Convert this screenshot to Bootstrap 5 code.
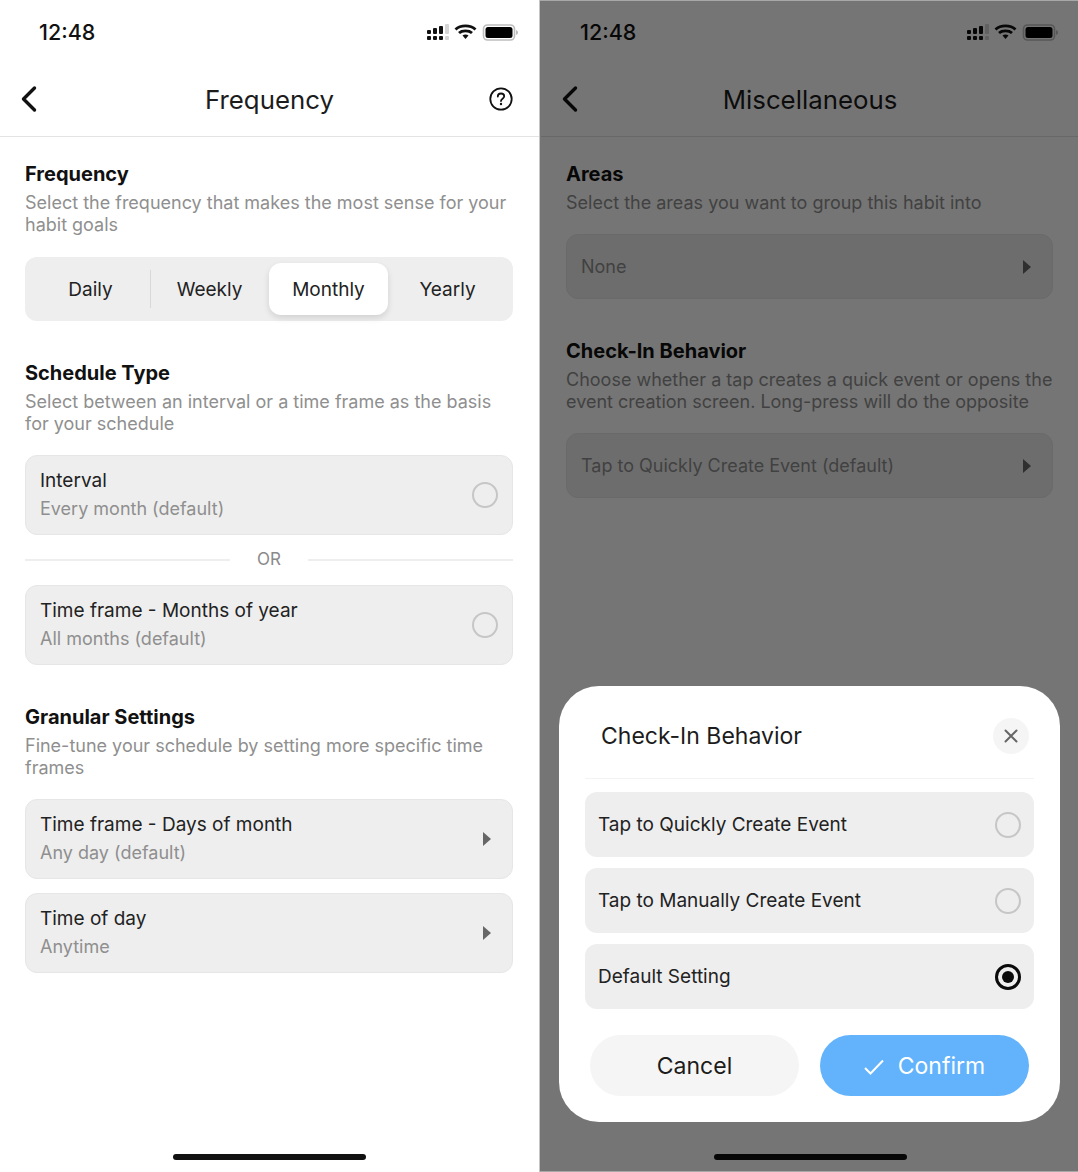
<!DOCTYPE html>
<html lang="en">
<head>
<meta charset="utf-8">
<title>Habit schedule</title>
<link href="https://cdn.jsdelivr.net/npm/bootstrap@5.3.0/dist/css/bootstrap.min.css" rel="stylesheet">
<style>
html,body{margin:0;background:#fff}
body{font-family:"Inter","Liberation Sans",sans-serif;color:#1a1a1a;width:1078px;height:1172px;overflow:hidden}
.stage{width:1078px;height:1172px;overflow:hidden}
.pane{position:relative;height:1172px;background:#fff;flex:none}
.pane-a{width:539px}
.pane-gap{width:1px;background:#c4c4c4;flex:none}
.pane-b{width:538px;overflow:hidden}
.pane-b .inner{width:538px;margin-left:1px}
.pane-b .homebar{left:174px}
.status{height:66px;padding:0 21px 0 39px;display:flex;align-items:center;justify-content:space-between}
.clock{font-size:21.5px;font-weight:500;line-height:1;color:#111}
.topbar{height:71px;border-bottom:1px solid #e3e3e3;position:relative;display:flex;align-items:center;justify-content:space-between;padding:0 26px 4px 20px}
.topbar .ttl{position:absolute;left:0;right:0;top:18px;text-align:center;font-size:25.8px;line-height:32px;color:#1c1c1c}
.body-pad{padding:26px 26px 0 25px}
.hd{font-size:20px;font-weight:700;line-height:22px;color:#111;margin:0 0 7px}
.sub{font-size:18px;line-height:22px;color:#8f8f8f;margin:0}
.seg{height:64px;margin-top:21px;background:#eeeeee;border-radius:12px;display:flex;padding:6px;position:relative}
.seg-item{flex:1;display:flex;align-items:center;justify-content:center;font-size:19px;color:#222;border-radius:12px;padding-top:2px}
.seg-item.on{background:#fff;box-shadow:0 3px 6px rgba(0,0,0,.12)}
.seg-rule{position:absolute;left:125px;top:13px;bottom:13px;width:1px;background:#d8d8d8}
.sec{margin-top:41px}
.opt{background:#eee;border:1px solid #e6e6e6;border-radius:12px;height:80px;padding:0 14px;display:flex;align-items:center;justify-content:space-between;margin-top:14px}
.opt-first{margin-top:20px}
.opt-flush{margin-top:0}
.opt .t1{font-size:19px;line-height:24px;color:#222}
.opt .t2{font-size:18px;line-height:24px;color:#8f8f8f;margin-top:4px}
.opt-plain{height:65px;padding:0 14px;margin-top:20px}
.orline{display:flex;align-items:center;height:50px;color:#8a8a8a;font-size:17px}
.orline::before,.orline::after{content:"";height:2px;background:#eee;flex:1}
.orline span{width:78px;text-align:center}
.ring{width:26px;height:26px;border:2px solid #c6c6c6;border-radius:50%;flex:none}
.caret{width:8px;height:14px;flex:none;margin-right:7px}
.homebar{position:absolute;left:173px;top:1154px;width:193px;height:6px;border-radius:3px;background:#111}
.dim{position:absolute;inset:0;background:rgba(0,0,0,.54);box-shadow:inset 0 1px 0 #a8a8a8,inset 0 -1px 0 #a8a8a8}
.sheet{position:absolute;left:19px;top:686px;width:501px;height:436px;border-radius:40px;background:#fff;padding:0 26px;overflow:hidden}
.sheet-top{height:93px;border-bottom:1px solid #f3f3f3;display:flex;align-items:center;justify-content:space-between;padding:8px 5px 0 16px}
.sheet-top .name{font-size:23px;color:#1c1c1c;padding-top:1px}
.closer{width:36px;height:36px;padding:0;border:0;background:#f5f5f5;border-radius:50%;display:flex;align-items:center;justify-content:center;margin-top:-1px}
.choice{height:65px;background:#eee;border-radius:12px;display:flex;align-items:center;justify-content:space-between;padding:0 13px;font-size:19px;color:#222;margin-top:11px}
.choice-first{margin-top:13px}
.lbl{padding-top:2px}
.ring-on{border:3px solid #0a0a0a;display:flex;align-items:center;justify-content:center}
.ring-on::after{content:"";width:12px;height:12px;border-radius:50%;background:#0a0a0a}
.actions{display:flex;gap:21px;padding:0 5px;margin-top:26px}
.pill{flex:1;height:61px;border:0;border-radius:31px;font-size:23px;display:flex;align-items:center;justify-content:center;gap:14px;padding:2px 0 0}
.pill-x,.pill-x:hover{background:#f5f5f5;color:#1c1c1c}
.pill-ok,.pill-ok:hover{background:#62b3fb;color:#fff}
</style>
</head>
<body>
<div class="stage d-flex">
  <section class="pane pane-a">
    <div class="status">
      <span class="clock">12:48</span>
      <svg width="92" height="18" viewBox="0 0 92 18" aria-hidden="true">
        <g transform="translate(1 0)"><g fill="#111"><rect x="0" y="6" width="4" height="4" rx="1"/><rect x="0" y="12" width="4" height="4" rx="1"/><rect x="6" y="4" width="4" height="6" rx="1"/><rect x="6" y="12" width="4" height="4" rx="1"/><rect x="12" y="2" width="4" height="8" rx="1"/><rect x="12" y="12" width="4" height="4" rx="1"/></g>
        <g fill="#d5d5d5"><rect x="18" y="0" width="4" height="10" rx="1"/><rect x="18" y="12" width="4" height="4" rx="1"/></g></g>
        <path d="M29.500 5.500C34.500 .6 44.500 .6 49.500 5.500M33 9C36 6.200 43 6.200 46 9" fill="none" stroke="#111" stroke-width="2.800"/><path d="M36.500 11.500 39.500 15 42.500 11.500C41 10.200 38 10.200 36.500 11.500Z" fill="#111"/>
        <rect x="57.500" y="1" width="31" height="15" rx="4" fill="none" stroke="#bdbdbd" stroke-width="1.600"/><rect x="59.500" y="3" width="27" height="11" rx="2.500" fill="#000"/><path d="M90 6v5c1.300-.4 2-1.400 2-2.500S91.300 6.400 90 6Z" fill="#bdbdbd"/>
      </svg>
    </div>
    <div class="topbar">
      <svg width="18" height="28" viewBox="0 0 18 28" aria-hidden="true"><path d="M14.500 3 3.500 14 14.500 25" fill="none" stroke="#111" stroke-width="3.400" stroke-linecap="round" stroke-linejoin="round"/></svg>
      <div class="ttl">Frequency</div>
      <svg width="24" height="24" viewBox="0 0 24 24" aria-hidden="true"><circle cx="12" cy="12" r="10.700" fill="none" stroke="#111" stroke-width="1.800"/><path d="M8.800 9.500C8.800 7.600 10.200 6.500 12 6.500s3.200 1.100 3.200 2.800c0 2.400-3.200 2.400-3.200 4.700" fill="none" stroke="#111" stroke-width="1.800" stroke-linecap="round"/><circle cx="12" cy="17" r="1.200" fill="#111"/></svg>
    </div>
    <div class="body-pad">
      <h2 class="hd">Frequency</h2>
      <p class="sub">Select the frequency that makes the most sense for your habit goals</p>
      <div class="seg">
        <div class="seg-item">Daily</div><div class="seg-item">Weekly</div><div class="seg-item on">Monthly</div><div class="seg-item">Yearly</div>
        <div class="seg-rule"></div>
      </div>
      <div class="sec">
        <h2 class="hd">Schedule Type</h2>
        <p class="sub">Select between an interval or a time frame as the basis for your schedule</p>
        <div class="opt opt-first"><div><div class="t1">Interval</div><div class="t2">Every month (default)</div></div><span class="ring"></span></div>
        <div class="orline"><span>OR</span></div>
        <div class="opt opt-flush"><div><div class="t1">Time frame - Months of year</div><div class="t2">All months (default)</div></div><span class="ring"></span></div>
      </div>
      <div class="sec">
        <h2 class="hd">Granular Settings</h2>
        <p class="sub">Fine-tune your schedule by setting more specific time frames</p>
        <div class="opt opt-first"><div><div class="t1">Time frame - Days of month</div><div class="t2">Any day (default)</div></div><svg class="caret" viewBox="0 0 8 14" aria-hidden="true"><path d="M0 0 8 7 0 14Z" fill="#666"/></svg></div>
        <div class="opt"><div><div class="t1">Time of day</div><div class="t2">Anytime</div></div><svg class="caret" viewBox="0 0 8 14" aria-hidden="true"><path d="M0 0 8 7 0 14Z" fill="#666"/></svg></div>
      </div>
    </div>
    <div class="homebar"></div>
  </section>
  <div class="pane-gap"></div>
  <section class="pane pane-b">
    <div class="inner">
      <div class="status">
        <span class="clock">12:48</span>
        <svg width="92" height="18" viewBox="0 0 92 18" aria-hidden="true">
          <g transform="translate(1 0)"><g fill="#111"><rect x="0" y="6" width="4" height="4" rx="1"/><rect x="0" y="12" width="4" height="4" rx="1"/><rect x="6" y="4" width="4" height="6" rx="1"/><rect x="6" y="12" width="4" height="4" rx="1"/><rect x="12" y="2" width="4" height="8" rx="1"/><rect x="12" y="12" width="4" height="4" rx="1"/></g>
          <g fill="#d5d5d5"><rect x="18" y="0" width="4" height="10" rx="1"/><rect x="18" y="12" width="4" height="4" rx="1"/></g></g>
          <path d="M29.500 5.500C34.500 .6 44.500 .6 49.500 5.500M33 9C36 6.200 43 6.200 46 9" fill="none" stroke="#111" stroke-width="2.800"/><path d="M36.500 11.500 39.500 15 42.500 11.500C41 10.200 38 10.200 36.500 11.500Z" fill="#111"/>
          <rect x="57.500" y="1" width="31" height="15" rx="4" fill="none" stroke="#bdbdbd" stroke-width="1.600"/><rect x="59.500" y="3" width="27" height="11" rx="2.500" fill="#000"/><path d="M90 6v5c1.300-.4 2-1.400 2-2.500S91.300 6.400 90 6Z" fill="#bdbdbd"/>
        </svg>
      </div>
      <div class="topbar">
        <svg width="18" height="28" viewBox="0 0 18 28" aria-hidden="true"><path d="M14.500 3 3.500 14 14.500 25" fill="none" stroke="#111" stroke-width="3.400" stroke-linecap="round" stroke-linejoin="round"/></svg>
        <div class="ttl">Miscellaneous</div>
      </div>
      <div class="body-pad">
        <h2 class="hd">Areas</h2>
        <p class="sub">Select the areas you want to group this habit into</p>
        <div class="opt opt-plain"><div class="sub">None</div><svg class="caret" viewBox="0 0 8 14" aria-hidden="true"><path d="M0 0 8 7 0 14Z" fill="#666"/></svg></div>
        <div class="sec">
          <h2 class="hd">Check-In Behavior</h2>
          <p class="sub">Choose whether a tap creates a quick event or opens the event creation screen. Long-press will do the opposite</p>
          <div class="opt opt-plain"><div class="sub">Tap to Quickly Create Event (default)</div><svg class="caret" viewBox="0 0 8 14" aria-hidden="true"><path d="M0 0 8 7 0 14Z" fill="#666"/></svg></div>
        </div>
      </div>
      <div class="homebar"></div>
    </div>
    <div class="dim"></div>
    <div class="sheet">
      <div class="sheet-top">
        <span class="name">Check-In Behavior</span>
        <button class="closer" type="button" aria-label="Close"><svg width="14" height="14" viewBox="0 0 14 14" aria-hidden="true"><path d="M1.500 1.500 12.500 12.500M12.500 1.500 1.500 12.500" stroke="#666" stroke-width="2" stroke-linecap="round"/></svg></button>
      </div>
      <div class="choice choice-first"><span class="lbl">Tap to Quickly Create Event</span><span class="ring"></span></div>
      <div class="choice"><span class="lbl">Tap to Manually Create Event</span><span class="ring"></span></div>
      <div class="choice"><span class="lbl">Default Setting</span><span class="ring ring-on"></span></div>
      <div class="actions">
        <button class="btn pill pill-x" type="button">Cancel</button>
        <button class="btn pill pill-ok" type="button"><svg width="20" height="16" viewBox="0 0 20 16" aria-hidden="true"><path d="M1 9 6.500 14.500 19 1.500" fill="none" stroke="#fff" stroke-width="2"/></svg>Confirm</button>
      </div>
    </div>
  </section>
</div>
<script src="https://cdn.jsdelivr.net/npm/bootstrap@5.3.0/dist/js/bootstrap.bundle.min.js"></script>
</body>
</html>
